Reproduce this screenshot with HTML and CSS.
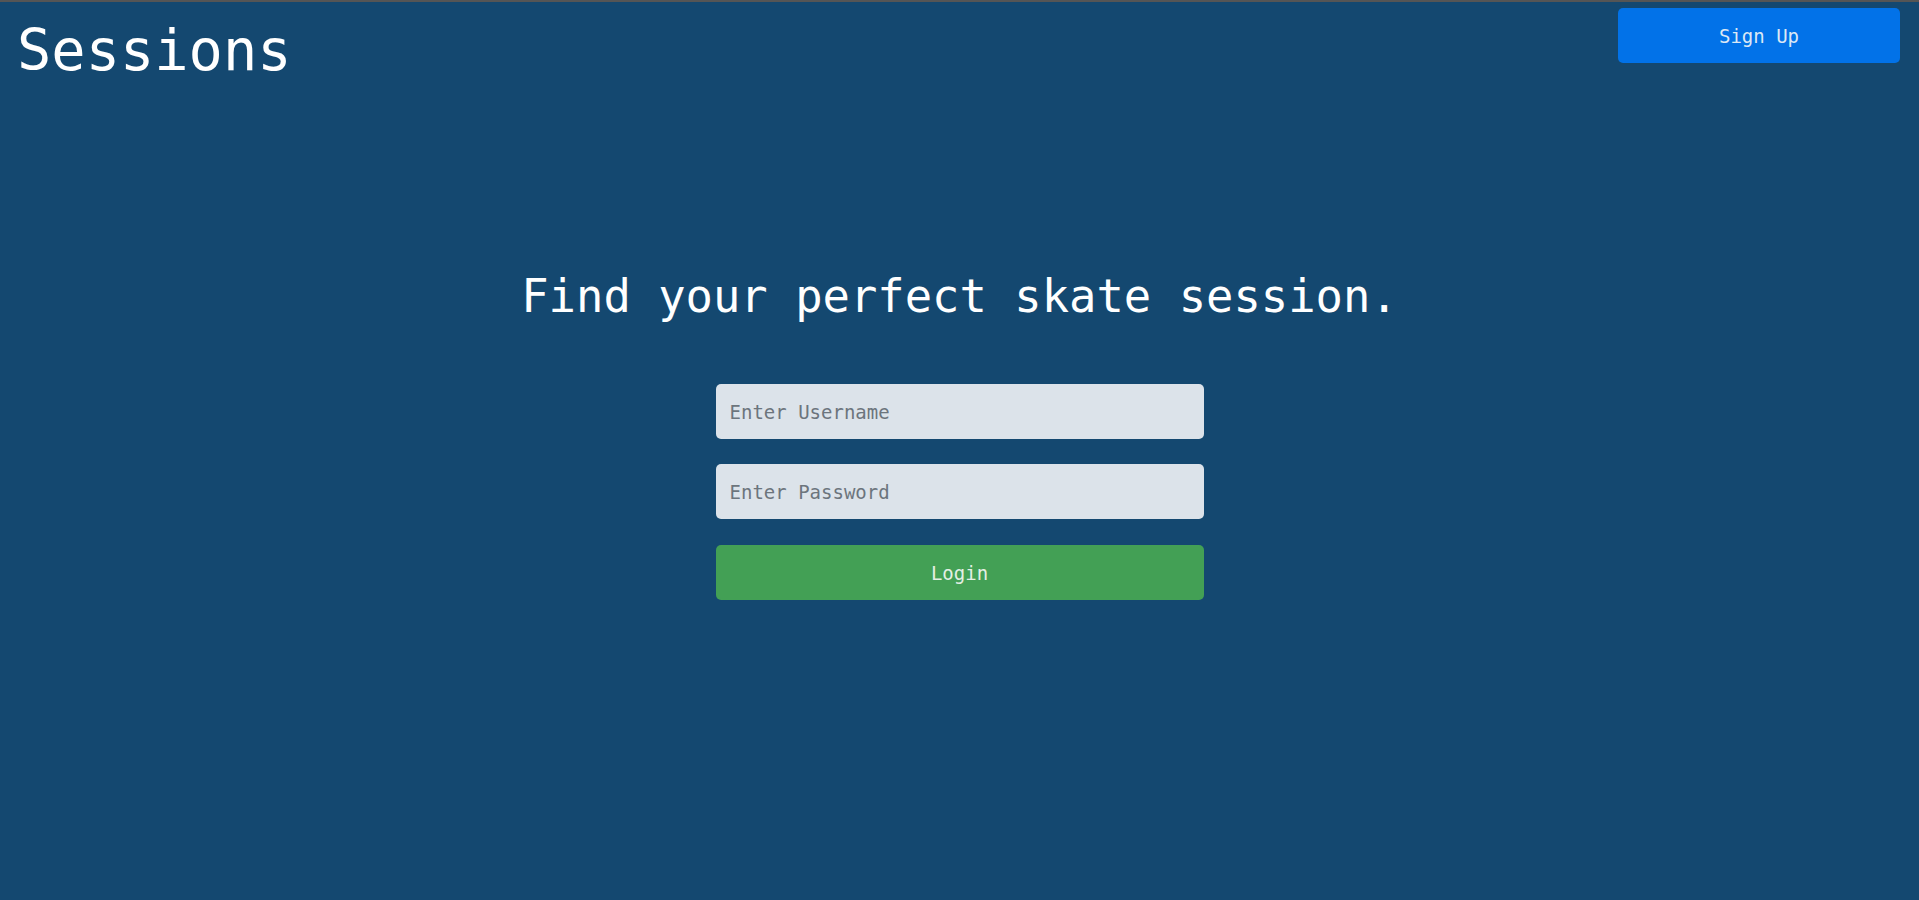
FILE: index.html
```html
<!DOCTYPE html>
<html lang="en">
<head>
<meta charset="utf-8">
<title>Sessions</title>
<link rel="stylesheet" href="styles.css">
</head>
<body>
<div class="page">
  <header class="topbar">
    <h1 class="brand">Sessions</h1>
    <button class="btn btn-signup" type="button">Sign Up</button>
  </header>
  <main class="hero">
    <h2 class="tagline">Find your perfect skate session.</h2>
    <form class="login-form">
      <input class="field" type="text" placeholder="Enter Username">
      <input class="field" type="password" placeholder="Enter Password">
      <button class="btn btn-login" type="button">Login</button>
    </form>
  </main>
</div>
</body>
</html>
```

FILE: styles.css
```css
html, body {
  margin: 0;
  padding: 0;
  height: 100%;
}
body {
  background: #144870;
  font-family: "DejaVu Sans Mono", "Liberation Mono", monospace;
  color: #ffffff;
}
.page {
  min-height: 100%;
  border-top: 2px solid #555555;
  box-sizing: border-box;
}
.topbar {
  display: flex;
  justify-content: space-between;
  align-items: flex-start;
  padding: 6px 19px 0 17px;
}
.brand {
  margin: 9px 0 0 0;
  font-size: 57px;
  font-weight: normal;
  line-height: normal;
  letter-spacing: 0;
}
.btn {
  border: none;
  font-family: "DejaVu Sans Mono", "Liberation Mono", monospace;
  font-size: 19px;
  height: 55px;
  border-radius: 5px;
  cursor: pointer;
}
.btn-signup {
  width: 282px;
  background: #0272e8;
  color: #dce8f5;
}
.hero {
  display: flex;
  flex-direction: column;
  align-items: center;
  padding-top: 187px;
}
.tagline {
  margin: 0 0 61px 0;
  font-size: 45.5px;
  font-weight: normal;
  line-height: normal;
}
.login-form {
  display: flex;
  flex-direction: column;
  gap: 25px;
  width: 488px;
}
.field {
  height: 55px;
  box-sizing: border-box;
  border: none;
  border-radius: 5px;
  background: #dce3ea;
  padding: 0 14px;
  font-family: "DejaVu Sans Mono", "Liberation Mono", monospace;
  font-size: 19px;
  color: #333;
}
.field::placeholder {
  color: #6c757d;
}
.btn-login {
  width: 100%;
  margin-top: 1px;
  background: #43a055;
  color: #e4efe4;
}
```
